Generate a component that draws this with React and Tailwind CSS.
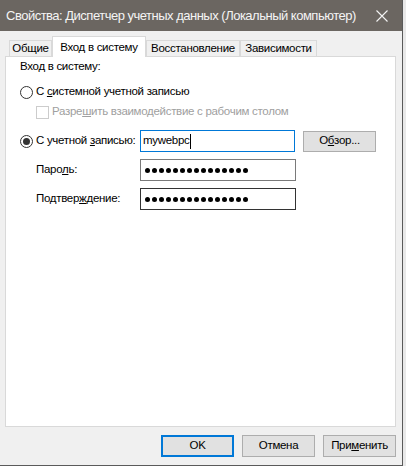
import React from "react";

const font = { fontFamily: '"Liberation Sans", Arial, sans-serif' };

function Radio({ checked }) {
  return (
    <span className="flex h-[13px] w-[13px] shrink-0 items-center justify-center rounded-full border border-[#333333] bg-white">
      {checked && <span className="h-[7px] w-[7px] rounded-full bg-[#333333]" />}
    </span>
  );
}

function Dots() {
  return (
    <div className="flex gap-[2px] pl-[4px]">
      {Array.from({ length: 15 }).map((_, i) => (
        <span key={i} className="h-[5px] w-[5px] rounded-full bg-black" />
      ))}
    </div>
  );
}

function Tab({ label, selected, width }) {
  if (selected) {
    return (
      <div className={`relative z-10 -mb-px flex h-[21px] items-start justify-center whitespace-nowrap border border-b-0 border-[#d9d9d9] bg-white pt-[2px] ${width}`}>
        {label}
      </div>
    );
  }
  return (
    <div className={`flex h-[16px] items-center justify-center whitespace-nowrap border border-b-0 border-[#d9d9d9] bg-[#f0f0f0] pt-[1px] ${width}`}>
      {label}
    </div>
  );
}

function Button({ children, primary }) {
  return (
    <div
      className={
        primary
          ? "flex h-[22px] w-[73px] items-center justify-center border-2 border-[#0078d7] bg-[#e1e1e1]"
          : "flex h-[22px] w-[73px] items-center justify-center border border-[#adadad] bg-[#e1e1e1]"
      }
    >
      {children}
    </div>
  );
}

export default function App() {
  return (
    <div className="flex h-[466px] w-[406px] bg-[#e9e9e9] text-[11.5px] tracking-[-0.3px] text-black" style={font}>
      <div className="flex h-[466px] w-[403px] flex-col border-r border-b border-[#5a5a5a] bg-[#f0f0f0]">

        {/* Title bar */}
        <div className="flex h-[31px] shrink-0 items-center justify-between bg-[#6b6661] pl-[6px] pr-[14px] text-[13px] tracking-[-0.5px] text-[#f4f4f4]">
          <span className="whitespace-nowrap">Свойства: Диспетчер учетных данных (Локальный компьютер)</span>
          <svg width="12" height="12" viewBox="0 0 12 12">
            <path d="M0.5 0.5 L11.5 11.5 M11.5 0.5 L0.5 11.5" stroke="#f4f4f4" strokeWidth="1.1" />
          </svg>
        </div>

        {/* Tabs */}
        <div className="mt-[5px] flex items-end pl-[9px]">
          <Tab label="Общие" width="w-[43px]" />
          <Tab label="Вход в систему" width="w-[94px]" selected />
          <Tab label="Восстановление" width="w-[94px]" />
          <Tab label="Зависимости" width="w-[77px]" />
        </div>

        {/* Panel */}
        <div className="ml-[5px] mr-[6px] flex h-[371px] shrink-0 flex-col whitespace-nowrap border border-[#d9d9d9] bg-white pl-[14px]">
          <div className="flex h-[20px] items-center">Вход в систему:</div>

          <div className="mt-[5px] flex h-[20px] items-center gap-[3px]">
            <Radio />
            <span>
              С <u>с</u>истемной учетной записью
            </span>
          </div>

          <div className="flex h-[20px] items-center gap-[3px] pl-[16px] text-[#a0a0a0]">
            <span className="h-[13px] w-[13px] border border-[#cccccc] bg-white" />
            <span>
              Разре<u>ш</u>ить взаимодействие с рабочим столом
            </span>
          </div>

          <div className="mt-[8px] flex h-[22px] items-center">
            <div className="flex w-[120px] items-center gap-[3px]">
              <Radio checked />
              <span>
                С учетной <u>з</u>аписью:
              </span>
            </div>
            <div className="flex h-[22px] w-[155px] items-center border border-[#0078d7] pl-[2px]">
              mywebpc<span className="ml-px h-[15px] w-px bg-black" />
            </div>
            <div className="ml-[8px] flex h-[21px] w-[73px] items-center justify-center border border-[#adadad] bg-[#e1e1e1]">
              О<u>б</u>зор...
            </div>
          </div>

          <div className="mt-[7px] flex h-[22px] items-center">
            <div className="w-[120px] pl-[16px]">
              Паро<u>л</u>ь:
            </div>
            <div className="flex h-[22px] w-[156px] items-center border border-[#7a7a7a]">
              <Dots />
            </div>
          </div>

          <div className="mt-[7px] flex h-[22px] items-center">
            <div className="w-[120px] pl-[16px]">
              Подтвер<u>ж</u>дение:
            </div>
            <div className="flex h-[22px] w-[156px] items-center border border-[#333333]">
              <Dots />
            </div>
          </div>
        </div>

        {/* Buttons */}
        <div className="mt-[8px] flex justify-end gap-[8px] pr-[6px]">
          <Button primary>OK</Button>
          <Button>Отмена</Button>
          <Button>
            При<u>м</u>енить
          </Button>
        </div>
      </div>
      <div className="w-[3px]" />
    </div>
  );
}
